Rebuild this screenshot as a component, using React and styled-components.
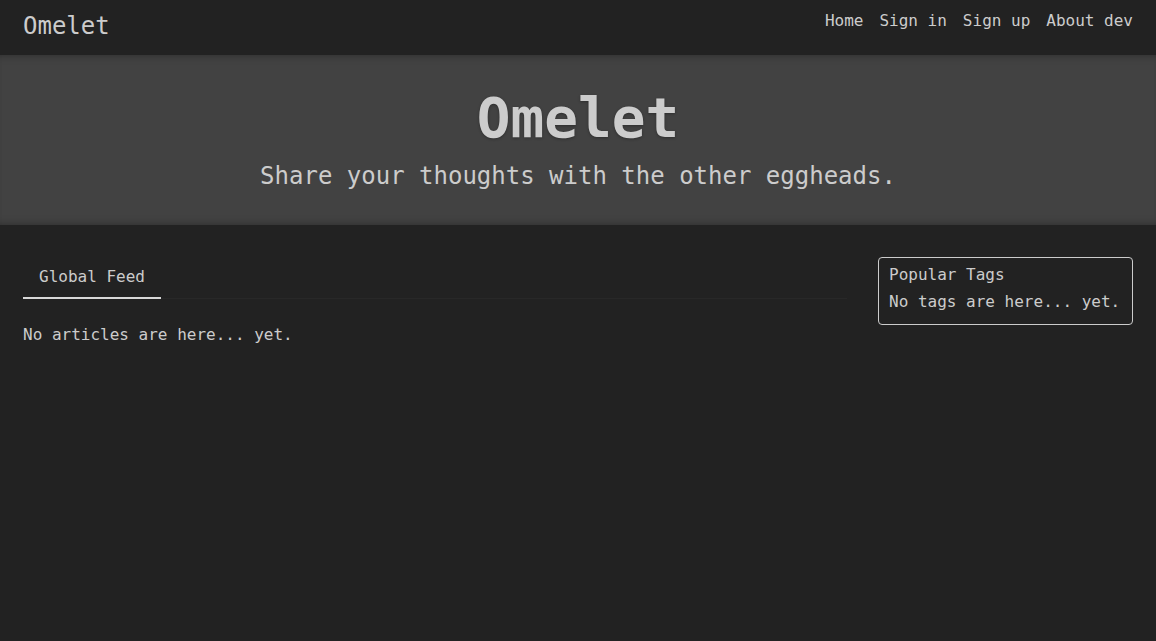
import React from "react";
import styled, { createGlobalStyle } from "styled-components";

const GlobalStyle = createGlobalStyle`
  html, body {
    margin: 0;
    padding: 0;
    background: #222222;
    color: #cccccc;
    font-family: "DejaVu Sans Mono", "Liberation Mono", monospace;
  }
  * {
    box-sizing: border-box;
  }
`;

const Page = styled.div`
  min-height: 641px;
  background: #222222;
`;

const NavBar = styled.nav`
  display: flex;
  justify-content: space-between;
  align-items: flex-start;
  height: 55px;
  padding: 0 23px;
`;

const Brand = styled.a`
  font-size: 24px;
  line-height: 28px;
  margin-top: 12px;
  color: #cccccc;
  text-decoration: none;
`;

const NavLinks = styled.ul`
  display: flex;
  gap: 16px;
  list-style: none;
  margin: 11px 0 0;
  padding: 0;
`;

const NavLink = styled.a`
  font-size: 16px;
  line-height: 20px;
  color: #cccccc;
  text-decoration: none;
`;

const Banner = styled.header`
  background: #424242;
  height: 170px;
  box-shadow: inset 0 8px 8px -8px rgba(0, 0, 0, 0.35),
    inset 0 -8px 8px -8px rgba(0, 0, 0, 0.35);
  display: flex;
  flex-direction: column;
  align-items: center;
  padding-top: 30px;
`;

const BannerTitle = styled.h1`
  margin: 0;
  font-size: 56px;
  line-height: 66px;
  font-weight: bold;
  color: #cccccc;
  text-shadow: 0 1px 3px rgba(0, 0, 0, 0.3);
`;

const BannerSub = styled.p`
  margin: 10px 0 0;
  font-size: 24px;
  line-height: 30px;
  color: #cccccc;
`;

const Container = styled.main`
  display: flex;
  gap: 31px;
  padding: 32px 23px 0;
`;

const Feed = styled.section`
  flex: 1;
`;

const Tabs = styled.div`
  display: flex;
  border-bottom: 1px solid #282828;
`;

const Tab = styled.div`
  padding: 10px 16px 11px;
  font-size: 16px;
  line-height: 19px;
  color: #cccccc;
  border-bottom: 2px solid ${(p) => (p.active ? "#d8d8d8" : "transparent")};
  margin-bottom: -1px;
`;

const Empty = styled.p`
  margin: 26px 0 0;
  font-size: 16px;
  line-height: 20px;
`;

const Sidebar = styled.aside`
  width: 255px;
  border: 1px solid #cccccc;
  border-radius: 4px;
  padding: 6px 10px 11px;
  align-self: flex-start;
`;

const SidebarTitle = styled.p`
  margin: 0;
  font-size: 16px;
  line-height: 22px;
`;

const SidebarText = styled.p`
  margin: 5px 0 0;
  font-size: 16px;
  line-height: 22px;
`;

export default function App() {
  return (
    <Page>
      <GlobalStyle />
      <NavBar>
        <Brand href="#">Omelet</Brand>
        <NavLinks>
          <li><NavLink href="#">Home</NavLink></li>
          <li><NavLink href="#">Sign in</NavLink></li>
          <li><NavLink href="#">Sign up</NavLink></li>
          <li><NavLink href="#">About dev</NavLink></li>
        </NavLinks>
      </NavBar>
      <Banner>
        <BannerTitle>Omelet</BannerTitle>
        <BannerSub>Share your thoughts with the other eggheads.</BannerSub>
      </Banner>
      <Container>
        <Feed>
          <Tabs>
            <Tab active>Global Feed</Tab>
          </Tabs>
          <Empty>No articles are here... yet.</Empty>
        </Feed>
        <Sidebar>
          <SidebarTitle>Popular Tags</SidebarTitle>
          <SidebarText>No tags are here... yet.</SidebarText>
        </Sidebar>
      </Container>
    </Page>
  );
}
